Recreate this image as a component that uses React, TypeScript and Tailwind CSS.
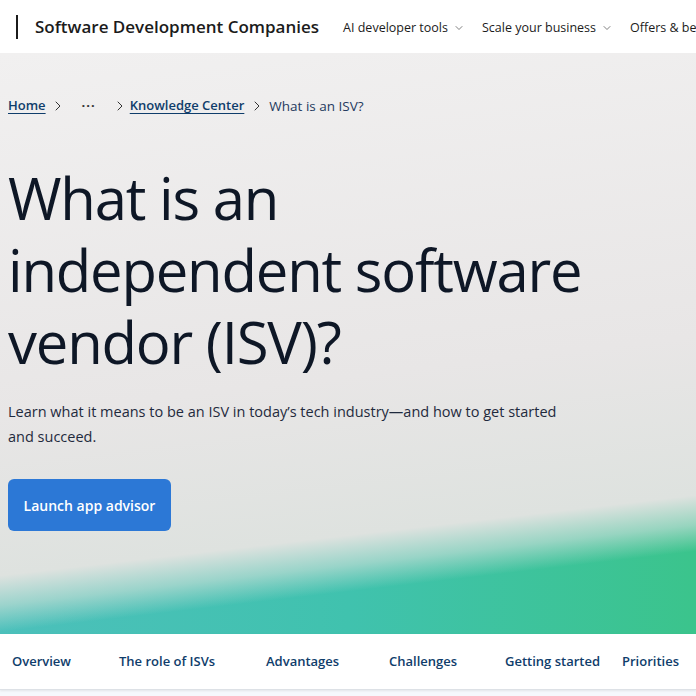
import React from 'react';
import { ChevronDown, ChevronRight } from 'lucide-react';

const navItems = ['AI developer tools', 'Scale your business', 'Offers & benefits'];
const tabs = [
  { label: 'Overview', w: 'w-[107px]' },
  { label: 'The role of ISVs', w: 'w-[147px]' },
  { label: 'Advantages', w: 'w-[123px]' },
  { label: 'Challenges', w: 'w-[116px]' },
  { label: 'Getting started', w: 'w-[117px]' },
  { label: 'Priorities', w: 'w-[100px]' },
];

const Header: React.FC = () => (
  <header className="h-[53px] bg-white flex items-center whitespace-nowrap overflow-hidden">
    <div className="shrink-0 ml-4 w-[2px] h-[24px] bg-[#1b1b1b]" />
    <span className="shrink-0 ml-[17px] text-[17px] font-semibold text-[#1b1b1b]">
      Software Development Companies
    </span>
    <nav className="shrink-0 ml-[24px] pt-[3px] flex items-center gap-[17px] text-[12.5px] text-[#1b1b1b]">
      {navItems.map(item => (
        <span key={item} className="flex items-center gap-[5px]">
          {item}
          {item !== 'Offers & benefits' && <ChevronDown className="w-3 h-3 text-[#555]" strokeWidth={1.5} />}
        </span>
      ))}
    </nav>
  </header>
);

const Breadcrumb: React.FC = () => (
  <div className="flex items-center text-[13px] text-[#1b1b1b] h-6">
    <a className="font-semibold text-[#0f3d6b] underline underline-offset-[3px]">Home</a>
    <ChevronRight className="w-4 h-4 mx-[4px] text-[#333]" strokeWidth={1.5} />
    <span className="ml-3 tracking-[1px] font-bold text-[#333]">···</span>
    <ChevronRight className="w-4 h-4 ml-[16px] mr-[2px] text-[#333]" strokeWidth={1.5} />
    <a className="font-semibold text-[#0f3d6b] underline underline-offset-[3px]">Knowledge Center</a>
    <ChevronRight className="w-4 h-4 ml-[5px] mr-[4px] text-[#333]" strokeWidth={1.5} />
    <span className="text-[13.5px] text-[#243a5e]">What is an ISV?</span>
  </div>
);

export default function App() {
  return (
    <div className="w-[696px] h-[696px] overflow-hidden bg-[#f5f8fc] font-['Open_Sans',sans-serif]">
      <Header />
      <section className="h-[581px] px-2 pt-[41px] bg-[linear-gradient(173.4deg,#f1f0f0_0%,#e8e6e6_55%,#dee2df_79%,rgba(190,220,212,0.7)_83.5%,rgba(190,220,212,0)_87.5%),linear-gradient(90deg,#4cc0bb_0%,#40c2ae_50%,#3bc48c_100%)]">
        <Breadcrumb />
        <h1 className="mt-[44px] text-[58px] leading-[72px] text-[#0e1726] tracking-[-1.2px]">
          What is an<br />independent software<br />vendor (ISV)?
        </h1>
        <p className="mt-[21px] text-[14.5px] leading-[25px] text-[#1f2a3d] max-w-[575px]">
          Learn what it means to be an ISV in today’s tech industry—and how to get started and succeed.
        </p>
        <button className="mt-[30px] w-[163px] h-[52px] rounded-md bg-[#2c78d6] text-white text-[14px] font-semibold">
          Launch app advisor
        </button>
      </section>
      <div className="h-[56px] bg-white border-b border-[#dde1e6] shadow-[0_1px_2px_rgba(0,0,0,0.08)] flex items-center whitespace-nowrap overflow-hidden pl-3 text-[13px] font-semibold text-[#0f3d6b]">
        {tabs.map(t => (
          <span key={t.label} className={`shrink-0 ${t.w}`}>{t.label}</span>
        ))}
      </div>
    </div>
  );
}
